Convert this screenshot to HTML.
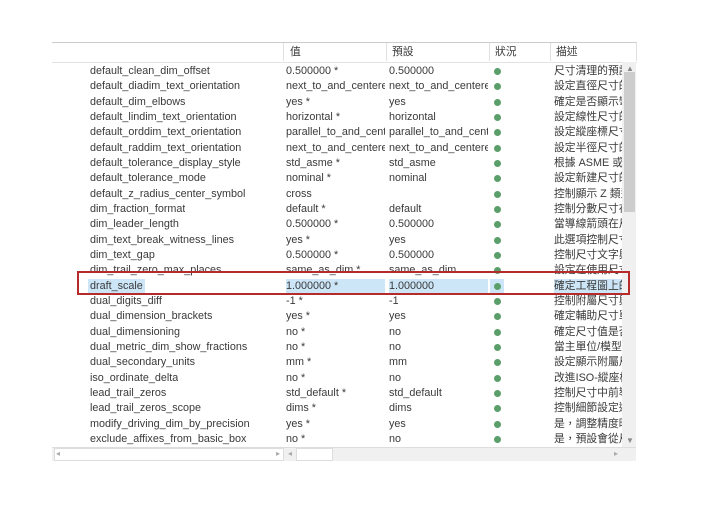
<!DOCTYPE html>
<html><head><meta charset="utf-8"><style>
body{margin:0;width:708px;height:518px;background:#fff;position:relative;overflow:hidden;font-family:"Liberation Sans","Noto Sans CJK TC",sans-serif;font-size:10.8px;color:#3a3a3a}
.a{position:absolute;white-space:nowrap;overflow:hidden;line-height:14px}
.hdr{position:absolute;left:52px;top:42px;width:585px;height:19px;border-top:1px solid #ccc;border-bottom:1px solid #e2e2e2;background:#fff}
.dv{position:absolute;top:43px;height:18px;width:1px;background:#e0e0e0}
.dot{position:absolute;width:7px;height:7px;border-radius:50%;background:#5a9e6a}
</style></head><body>
<div class="hdr"></div>
<div class="dv" style="left:283px"></div><div class="dv" style="left:386px"></div><div class="dv" style="left:489px"></div><div class="dv" style="left:550px"></div><div class="dv" style="left:636px"></div>
<div class="a" style="left:290px;top:45px">值</div>
<div class="a" style="left:392px;top:45px">預設</div>
<div class="a" style="left:495px;top:45px">狀況</div>
<div class="a" style="left:556px;top:45px">描述</div>
<div class="a" style="left:622px;top:62px;width:14px;height:385px;background:#f0f0f0"></div>
<div class="a" style="left:624px;top:72px;width:11px;height:140px;background:#cdcdcd"></div>
<div class="a" style="left:626px;top:62px;font-size:8px;color:#888">▲</div>
<div class="a" style="left:626px;top:434px;font-size:8px;color:#888">▼</div>
<div class="a" style="left:52px;top:447px;width:584px;height:13px;background:#f0f0f0;border-top:1px solid #ddd"></div>
<div class="a" style="left:54px;top:448px;width:228px;height:11px;background:#fff;border:1px solid #ddd"></div>
<div class="a" style="left:296px;top:448px;width:35px;height:11px;background:#fff;border:1px solid #ddd"></div>
<div class="a" style="left:56px;top:447px;font-size:8px;color:#aaa">◂</div>
<div class="a" style="left:276px;top:447px;font-size:8px;color:#aaa">▸</div>
<div class="a" style="left:288px;top:447px;font-size:8px;color:#aaa">◂</div>
<div class="a" style="left:614px;top:447px;font-size:8px;color:#aaa">▸</div>
<div id="rows"></div>
<div class="a" style="left:77px;top:271px;width:549px;height:20px;border:2px solid #b52a2a"></div>
<script>
var d=[["default_clean_dim_offset","0.500000 *","0.500000","尺寸清理的預設"],
["default_diadim_text_orientation","next_to_and_centere","next_to_and_centere","設定直徑尺寸的"],
["default_dim_elbows","yes *","yes","確定是否顯示彎"],
["default_lindim_text_orientation","horizontal *","horizontal","設定線性尺寸的"],
["default_orddim_text_orientation","parallel_to_and_cent","parallel_to_and_cent","設定縱座標尺寸"],
["default_raddim_text_orientation","next_to_and_centere","next_to_and_centere","設定半徑尺寸的"],
["default_tolerance_display_style","std_asme *","std_asme","根據 ASME 或 I"],
["default_tolerance_mode","nominal *","nominal","設定新建尺寸的"],
["default_z_radius_center_symbol","cross","","控制顯示 Z 類型"],
["dim_fraction_format","default *","default","控制分數尺寸在"],
["dim_leader_length","0.500000 *","0.500000","當導線箭頭在尺"],
["dim_text_break_witness_lines","yes *","yes","此選項控制尺寸"],
["dim_text_gap","0.500000 *","0.500000","控制尺寸文字與"],
["dim_trail_zero_max_places","same_as_dim *","same_as_dim","設定在使用尺寸"],
["draft_scale","1.000000 *","1.000000","確定工程圖上的"],
["dual_digits_diff","-1 *","-1","控制附屬尺寸與"],
["dual_dimension_brackets","yes *","yes","確定輔助尺寸單"],
["dual_dimensioning","no *","no","確定尺寸值是否"],
["dual_metric_dim_show_fractions","no *","no","當主單位/模型單"],
["dual_secondary_units","mm *","mm","設定顯示附屬尺"],
["iso_ordinate_delta","no *","no","改進ISO-縱座標"],
["lead_trail_zeros","std_default *","std_default","控制尺寸中前導"],
["lead_trail_zeros_scope","dims *","dims","控制細節設定選"],
["modify_driving_dim_by_precision","yes *","yes","是，調整精度時"],
["exclude_affixes_from_basic_box","no *","no","是，預設會從尺"]];
var h="";
d.forEach(function(r,i){var y=64+i*15.33;var hl=i==14;
var bg=hl?"background:#cde6f7;":"";
h+='<div class="a" style="left:90px;top:'+y+'px;'+(hl?bg+'padding:0 2px;margin-left:-2px;':'')+'">'+r[0]+'</div>';
h+='<div class="a" style="left:286px;top:'+y+'px;width:99px;'+(hl?bg:'')+'">'+r[1]+'</div>';
h+='<div class="a" style="left:389px;top:'+y+'px;width:99px;'+(hl?bg:'')+'">'+r[2]+'</div>';
if(hl)h+='<div class="a" style="left:490px;top:'+y+'px;width:14px;height:14px;background:#cde6f7"></div>';
h+='<div class="dot" style="left:494px;top:'+(y+4)+'px"></div>';
h+='<div class="a" style="left:554px;top:'+y+'px;width:68px;'+(hl?bg:'')+'">'+r[3]+'</div>';});
document.getElementById("rows").innerHTML=h;
</script>
</body></html>
